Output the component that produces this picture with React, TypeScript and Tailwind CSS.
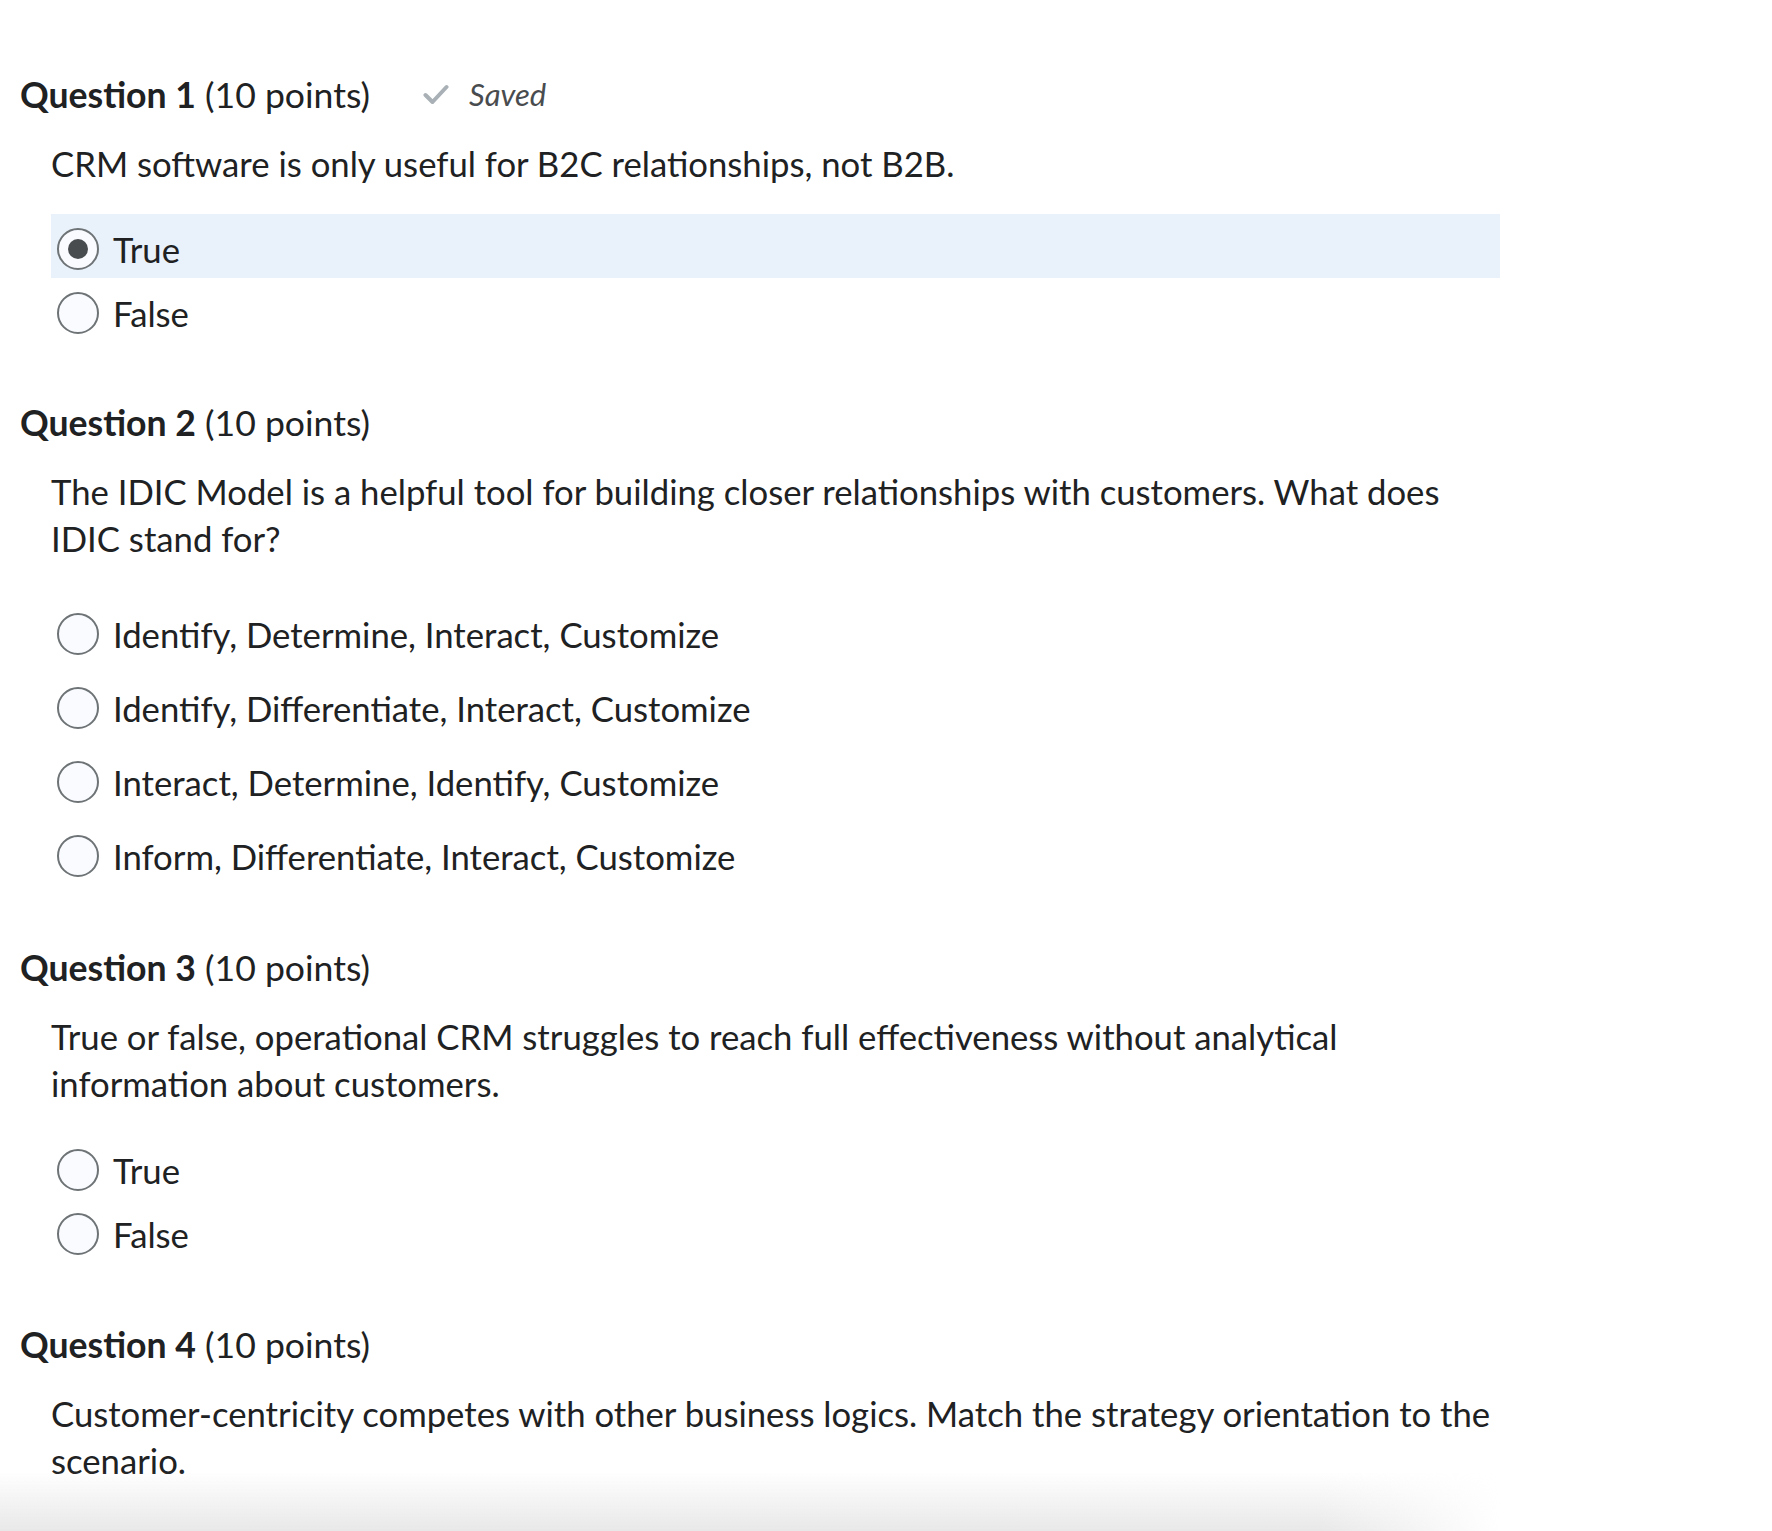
import React from "react";

const font = { fontFamily: "Lato, 'Noto Sans', sans-serif" };

function Radio({ checked }: { checked?: boolean }) {
  return (
    <span className="flex h-[42px] w-[42px] shrink-0 items-center justify-center rounded-full border-2 border-[#6e7376] bg-[#f9fbff]">
      {checked && <span className="block h-[20px] w-[20px] rounded-full bg-[#494c4e]" />}
    </span>
  );
}

function TFOption({ label, checked }: { label: string; checked?: boolean }) {
  return (
    <div
      className={`flex h-[64px] items-center gap-[14px] pl-[6px] pt-[6px] ${checked ? "bg-[#e9f1fa]" : ""}`}
    >
      <Radio checked={checked} />
      <span className="text-[34.7px] leading-[47px] text-[#202122]">{label}</span>
    </div>
  );
}

function MCOption({ label }: { label: string }) {
  return (
    <div className="flex h-[74px] items-center gap-[14px] pl-[6px]">
      <Radio />
      <span className="text-[34.7px] leading-[47px] text-[#202122]">{label}</span>
    </div>
  );
}

function Heading({ n, saved }: { n: number; saved?: boolean }) {
  return (
    <div className="flex h-[45px] items-center pl-[20px] text-[35.6px] leading-[45px] text-[#202122]">
      <span className="font-bold">Question {n}</span>
      <span>&nbsp;(10 points)</span>
      {saved && (
        <span className="ml-[53px] flex items-center gap-[20px] text-[31px] italic text-[#494c4e]">
          <svg width="26" height="21" viewBox="0 0 26 21" fill="none">
            <path d="M2.5 11 L9.5 18 L23.5 3" stroke="#a9b1b6" strokeWidth="4" strokeLinecap="round" strokeLinejoin="round" />
          </svg>
          Saved
        </span>
      )}
    </div>
  );
}

function QText({ children }: { children: React.ReactNode }) {
  return (
    <p className="mt-[23px] w-[1456px] pl-[51px] text-[34.7px] leading-[47px] text-[#202122] box-content">
      {children}
    </p>
  );
}

export default function App() {
  return (
    <div className="relative h-[1531px] w-[1772px] overflow-hidden bg-white" style={font}>
      <div className="pt-[72px]">
        <Heading n={1} saved />
        <QText>CRM software is only useful for B2C relationships, not B2B.</QText>
        <div className="ml-[51px] mt-[27px] w-[1449px]">
          <TFOption label="True" checked />
          <TFOption label="False" />
        </div>

        <div className="mt-[58px]">
          <Heading n={2} />
        </div>
        <QText>
          The IDIC Model is a helpful tool for building closer relationships with customers. What does IDIC stand for?
        </QText>
        <div className="ml-[51px] mt-[35px] w-[1449px]">
          <MCOption label="Identify, Determine, Interact, Customize" />
          <MCOption label="Identify, Differentiate, Interact, Customize" />
          <MCOption label="Interact, Determine, Identify, Customize" />
          <MCOption label="Inform, Differentiate, Interact, Customize" />
        </div>

        <div className="mt-[52px]">
          <Heading n={3} />
        </div>
        <QText>
          True or false, operational CRM struggles to reach full effectiveness without analytical information about customers.
        </QText>
        <div className="ml-[51px] mt-[28px] w-[1449px]">
          <TFOption label="True" />
          <TFOption label="False" />
        </div>

        <div className="mt-[59px]">
          <Heading n={4} />
        </div>
        <QText>
          Customer-centricity competes with other business logics. Match the strategy orientation to the scenario.
        </QText>
      </div>

      <div className="pointer-events-none absolute bottom-0 left-0 h-[60px] w-[1500px] bg-gradient-to-b from-white/0 to-[#e8e8e8] [mask-image:linear-gradient(to_right,black_88%,transparent)]" />
    </div>
  );
}
